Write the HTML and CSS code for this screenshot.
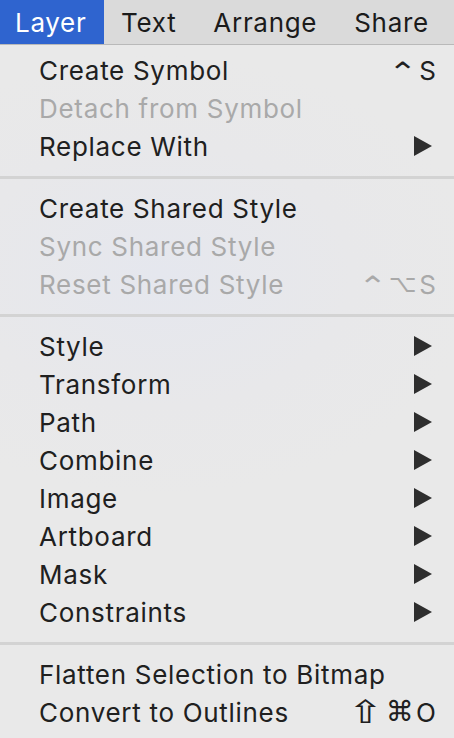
FILE: index.html
```html
<!DOCTYPE html>
<html>
<head>
<meta charset="utf-8">
<link rel="stylesheet" href="styles.css">
</head>
<body>
<div class="bar">
  <div class="tab active">Layer</div>
  <div class="tab">Text</div>
  <div class="tab">Arrange</div>
  <div class="tab">Share</div>
</div>
<div class="menu">
  <div class="item"><span>Create Symbol</span><span class="key"><span class="sym ctrl">⌃</span>S</span></div>
  <div class="item off"><span>Detach from Symbol</span></div>
  <div class="item"><span>Replace With</span><span class="arrow"></span></div>
  <div class="sep"></div>
  <div class="item"><span>Create Shared Style</span></div>
  <div class="item off"><span>Sync Shared Style</span></div>
  <div class="item off"><span>Reset Shared Style</span><span class="key"><span class="sym ctrl">⌃</span><span class="sym opt">⌥</span>S</span></div>
  <div class="sep"></div>
  <div class="item"><span>Style</span><span class="arrow"></span></div>
  <div class="item"><span>Transform</span><span class="arrow"></span></div>
  <div class="item"><span>Path</span><span class="arrow"></span></div>
  <div class="item"><span>Combine</span><span class="arrow"></span></div>
  <div class="item"><span>Image</span><span class="arrow"></span></div>
  <div class="item"><span>Artboard</span><span class="arrow"></span></div>
  <div class="item"><span>Mask</span><span class="arrow"></span></div>
  <div class="item"><span>Constraints</span><span class="arrow"></span></div>
  <div class="sep"></div>
  <div class="item"><span>Flatten Selection to Bitmap</span></div>
  <div class="item"><span>Convert to Outlines</span><span class="key"><span class="sym shift">⇧</span><span class="sym cmd">⌘</span>O</span></div>
</div>
</body>
</html>
```
FILE: styles.css
```css
html, body {
  margin: 0;
  padding: 0;
}
body {
  width: 454px;
  height: 738px;
  overflow: hidden;
  background: #e9e9e9;
  font-family: Inter, "Liberation Sans", "DejaVu Sans", sans-serif;
  font-size: 26px;
  letter-spacing: 0.7px;
  color: #202020;
}
.bar {
  display: flex;
  height: 44px;
  background: #dadada;
  border-bottom: 1px solid #b9b9b9;
}
.tab {
  display: flex;
  align-items: center;
  padding: 0 20px 0 17px;
  color: #1b1b1b;
}
.tab.active {
  background: #2f64cf;
  color: #ffffff;
  padding: 0 0 0 15px;
  width: 89px;
}
.menu {
  padding: 6px 0 7px;
  background: radial-gradient(ellipse 320px 220px at 160px 230px, #e5e7ee 0%, #e8e8ea 60%, #e9e9e9 100%);
  height: 680px;
}
.item {
  height: 38px;
  display: flex;
  align-items: center;
  justify-content: space-between;
  padding: 0 18px 0 39px;
}
.item.off {
  color: #a9a9a9;
}
.key {
  display: flex;
  align-items: center;
  letter-spacing: 0;
}
.sym {
  display: inline-block;
  font-family: "DejaVu Sans", sans-serif;
  font-size: 24px;
}
.sym.ctrl {
  font-size: 28px;
  font-weight: 300;
  transform: scaleX(1.25);
  margin: 0 5px 0 4px;
  position: relative;
  top: 2px;
}
.sym.opt {
  margin-right: 3px;
}
.sym.shift {
  font-size: 32px;
  line-height: 30px;
  transform: scaleX(1.35);
  margin: 0 7px 0 4px;
}
.sym.cmd {
  font-size: 28px;
  line-height: 30px;
  margin-right: 2px;
}
.arrow {
  width: 0;
  height: 0;
  border-top: 10px solid transparent;
  border-bottom: 10px solid transparent;
  border-left: 18px solid #2e2e2e;
  margin-right: 4px;
}
.sep {
  height: 3px;
  background: #d3d3d3;
  margin: 11px 0 10px;
}
```
